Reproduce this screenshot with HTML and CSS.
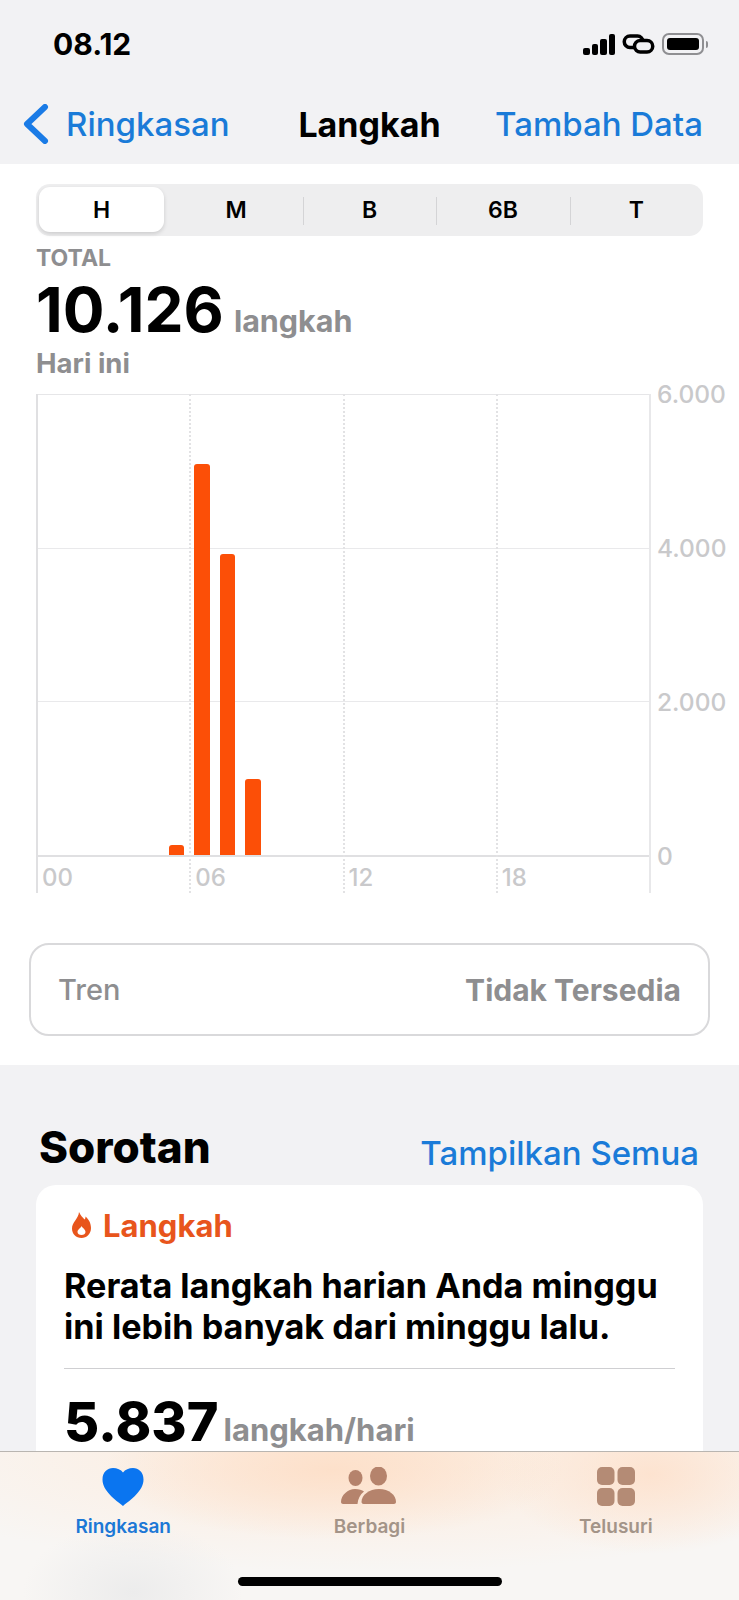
FILE: index.html
```html
<!DOCTYPE html>
<html lang="id">
<head>
  <meta charset="UTF-8">
  <meta name="viewport" content="width=device-width, initial-scale=1.0">
  <title>Langkah</title>
  <link rel="stylesheet" href="styles.css">
</head>
<body>
  <div class="phone">
    <header class="top">
      <div class="status">
        <span class="time">08.12</span>
        <div class="status-icons">
          <div class="signal">
            <span class="sig1"></span><span class="sig2"></span><span class="sig3"></span><span class="sig4"></span>
          </div>
          <svg class="link-icon" width="33" height="20" viewBox="0 0 33 20" fill="none" stroke="#000" stroke-width="3.500">
            <path d="M13 13.500H8A5.700 5.700 0 0 1 8 2h7.500A5.700 5.700 0 0 1 21 7.500"/>
            <path d="M12.500 12.500A5.700 5.700 0 0 1 18 6.500h7A5.700 5.700 0 0 1 25 18h-6.500A5.700 5.700 0 0 1 12.500 12.500Z"/>
          </svg>
          <div class="battery"><div class="battery-fill"></div></div>
          <span class="battery-nub"></span>
        </div>
      </div>
      <nav class="navbar">
        <a class="back">
          <svg width="26" height="40" viewBox="0 0 26 40" fill="none" stroke="#1a7be6" stroke-width="6" stroke-linecap="round" stroke-linejoin="round">
            <path d="M22 3 L4 20 L22 37"/>
          </svg>
          Ringkasan
        </a>
        <h1>Langkah</h1>
        <a class="add">Tambah Data</a>
      </nav>
    </header>

    <main class="detail">
      <div class="segments">
        <div class="seg active">H</div>
        <div class="seg">M</div>
        <div class="seg">B</div>
        <div class="seg">6B</div>
        <div class="seg">T</div>
      </div>

      <div class="total-label">TOTAL</div>
      <div class="total-row"><span class="total-value">10.126</span> <span class="total-unit">langkah</span></div>
      <div class="total-date">Hari ini</div>

      <div class="chart">
        <div class="plot">
          <div class="hline hline-1"></div>
          <div class="hline hline-2"></div>
          <div class="bars">
            <div class="slot" style="grid-column: 6"><div class="bar" style="height: 2.2%"></div></div>
            <div class="slot" style="grid-column: 7"><div class="bar" style="height: 85%"></div></div>
            <div class="slot" style="grid-column: 8"><div class="bar" style="height: 65.4%"></div></div>
            <div class="slot" style="grid-column: 9"><div class="bar" style="height: 16.5%"></div></div>
          </div>
        </div>
        <div class="xcols">
          <div class="xcol"><span>00</span></div>
          <div class="xcol"><span>06</span></div>
          <div class="xcol"><span>12</span></div>
          <div class="xcol"><span>18</span></div>
        </div>
        <div class="yaxis">
          <span>6.000</span>
          <span>4.000</span>
          <span>2.000</span>
          <span>0</span>
        </div>
      </div>

      <div class="trend">
        <span>Tren</span>
        <strong>Tidak Tersedia</strong>
      </div>
    </main>

    <section class="highlights">
      <div class="section-head">
        <h2>Sorotan</h2>
        <a>Tampilkan Semua</a>
      </div>
      <article class="card">
        <div class="card-title">
          <svg width="21" height="26" viewBox="0 0 21 26">
            <path fill="#e8551c" fill-rule="evenodd" d="M8 0C9.500 3.500 11.500 5 13.500 7.500 14.500 6.500 14.500 5.500 14.500 4.500 17.500 7 20 11 20 16 20 22 15.500 26 10.500 26 5 26 1 22 1 16.500 1 10 7.500 7 8 0ZM10.500 14C10 16 6.500 17.500 6.500 20 6.500 22 8.300 23 10.500 23S14.500 22 14.500 20C14.500 17.500 11.500 16 10.500 14Z"/>
          </svg>
          Langkah
        </div>
        <p class="card-text">Rerata langkah harian Anda minggu ini lebih banyak dari minggu lalu.</p>
        <div class="card-stat"><span class="stat-value">5.837</span> <span class="stat-unit">langkah/hari</span></div>
      </article>
    </section>

    <footer class="tabbar">
      <div class="tab current">
        <svg width="44" height="40" viewBox="0 0 43 40">
          <path fill="#0a75f0" d="M21.500 39C14 33 1 24 1 12.500 1 5 6 1 11.500 1 15.500 1 19.500 2.500 21.500 5.500 23.500 2.500 27.500 1 31.500 1 37 1 42 5 42 12.500 42 24 29 33 21.500 39Z"/>
        </svg>
        <span>Ringkasan</span>
      </div>
      <div class="tab">
        <svg width="56" height="40" viewBox="0 0 56 40" fill="#b5836c">
          <ellipse cx="14.500" cy="11" rx="7" ry="8"/>
          <ellipse cx="37.500" cy="9" rx="8.500" ry="9.500"/>
          <path d="M0 35C0 28 7 22 14 22 18 22 21 23 23 24.500 19 27.500 17 32 16.500 37H2C1 37 0 36 0 35Z"/>
          <path d="M20.500 35C20.500 28 28 22 38 22S55 28 55 35C55 36 54 37 53 37H22.500C21.500 37 20.500 36 20.500 35Z"/>
        </svg>
        <span>Berbagi</span>
      </div>
      <div class="tab">
        <svg width="40" height="40" viewBox="0 0 40 40" fill="#b48b75">
          <rect x="1" y="0" width="17.500" height="18" rx="5"/>
          <rect x="21.500" y="0" width="17.500" height="18" rx="5"/>
          <rect x="1" y="21" width="17.500" height="18" rx="5"/>
          <rect x="21.500" y="21" width="17.500" height="18" rx="5"/>
        </svg>
        <span>Telusuri</span>
      </div>
      <div class="home-bar"></div>
    </footer>
  </div>
</body>
</html>
```

FILE: styles.css
```css
html, body {
  margin: 0;
  padding: 0;
}

body {
  font-family: Inter, "Liberation Sans", sans-serif;
  background-color: #f2f2f4;
}

.phone {
  position: relative;
  width: 739px;
  height: 1600px;
  overflow: hidden;
  background-color: #f2f2f4;
  color: #000;
}

/* Status bar and navigation */
.status {
  height: 88px;
  display: flex;
  align-items: center;
  justify-content: space-between;
  padding: 0 31px 0 53px;
}

.time {
  font-size: 30px;
  font-weight: 700;
}

.status-icons {
  display: flex;
  align-items: center;
}

.signal {
  display: flex;
  align-items: flex-end;
  gap: 2px;
  height: 21px;
  margin-right: 7px;
}

.signal span {
  width: 6.5px;
  background-color: #000;
  border-radius: 2px;
}

.sig1 { height: 7px; }
.sig2 { height: 11px; }
.sig3 { height: 16px; }
.sig4 { height: 21px; }

.link-icon {
  margin-right: 7px;
}

.battery {
  box-sizing: border-box;
  width: 42px;
  height: 22px;
  padding: 3px;
  border: 2px solid #8f8f92;
  border-radius: 7px;
}

.battery-fill {
  height: 100%;
  background-color: #000;
  border-radius: 3px;
}

.battery-nub {
  width: 2px;
  height: 7px;
  margin-left: 2px;
  background-color: #8f8f92;
  border-radius: 0 2px 2px 0;
}

.navbar {
  height: 76px;
  box-sizing: border-box;
  padding: 0 36px 4px;
  display: grid;
  grid-template-columns: 1fr auto 1fr;
  align-items: center;
  font-size: 33px;
  color: #1a7bd8;
}

.navbar a {
  display: flex;
  align-items: center;
  gap: 17px;
  font-weight: 500;
}

.navbar .back {
  margin-left: -13px;
}

.navbar .add {
  justify-self: end;
}

.navbar h1 {
  margin: 0;
  font-size: 34px;
  font-weight: 700;
  color: #000;
}

/* White detail block with the chart */
.detail {
  background-color: #fff;
  padding: 20px 36px 29px;
}

.segments {
  display: grid;
  grid-template-columns: repeat(5, 1fr);
  height: 52px;
  background-color: #eeeeef;
  border-radius: 14px;
}

.seg {
  position: relative;
  display: flex;
  align-items: center;
  justify-content: center;
  font-size: 23px;
  font-weight: 600;
}

.seg + .seg + .seg::before {
  content: "";
  position: absolute;
  left: 0;
  top: 13px;
  bottom: 11px;
  width: 1px;
  background-color: #d4d4d6;
}

.seg.active {
  margin: 3px 5px 4px 3px;
  background-color: #fff;
  border-radius: 11px;
  box-shadow: 0 2px 4px rgba(0, 0, 0, 0.14);
}

.total-label {
  margin-top: 12px;
  line-height: 20px;
  font-size: 23px;
  font-weight: 700;
  color: #8e8e90;
}

.total-row {
  display: flex;
  align-items: baseline;
  gap: 10px;
  height: 60px;
  line-height: 60px;
  margin-top: 12px;
}

.total-value {
  font-size: 62px;
  font-weight: 700;
}

.total-unit {
  font-size: 30.500px;
  font-weight: 700;
  color: #8e8e90;
}

.total-date {
  margin-top: 8px;
  line-height: 30px;
  font-size: 27.500px;
  font-weight: 700;
  color: #8e8e90;
}

.chart {
  position: relative;
  height: 499px;
  margin-top: 16px;
}

.plot {
  position: relative;
  box-sizing: border-box;
  width: 613px;
  height: 463px;
  border-top: 1px solid #e6e6e8;
  border-bottom: 2px solid #e0e0e2;
}

.hline {
  position: absolute;
  left: 0;
  right: 0;
  height: 1px;
  background-color: #e9e9eb;
}

.hline-1 { top: 33.2%; }
.hline-2 { top: 66.5%; }

.bars {
  position: relative;
  z-index: 1;
  display: grid;
  grid-template-columns: repeat(24, 1fr);
  height: 100%;
}

.slot {
  display: flex;
  align-items: flex-end;
  justify-content: center;
}

.bar {
  width: 15.500px;
  background-color: #fc4f07;
  border-radius: 3px 3px 0 0;
}

.xcols {
  position: absolute;
  top: 0;
  bottom: 0;
  left: 0;
  width: 613px;
  display: grid;
  grid-template-columns: repeat(4, 1fr);
  border-right: 2px solid #e8e8ea;
}

.xcol {
  display: flex;
  align-items: flex-end;
  padding-left: 4px;
  border-left: 2px dotted #e2e2e4;
  font-size: 24px;
  font-weight: 500;
  line-height: 30px;
  color: #c9c9cb;
}

.xcol:first-child {
  border-left: 2px solid #e0e0e2;
}

.yaxis {
  position: absolute;
  top: -14px;
  left: 621px;
  height: 490px;
  display: flex;
  flex-direction: column;
  justify-content: space-between;
  font-size: 24.500px;
  font-weight: 500;
  line-height: 28px;
  color: #c9c9cb;
}

.trend {
  display: flex;
  align-items: center;
  justify-content: space-between;
  height: 93px;
  box-sizing: border-box;
  margin: 50px -7px 0;
  padding: 0 27px;
  border: 2px solid #d9d9db;
  border-radius: 20px;
  font-size: 29px;
  font-weight: 500;
  color: #8e8e90;
}

.trend strong {
  font-size: 30px;
  font-weight: 700;
}

/* Sorotan */
.highlights {
  padding: 60px 36px 0;
}

.section-head {
  display: flex;
  align-items: center;
  justify-content: space-between;
  height: 48px;
  margin-bottom: 12px;
  padding: 0 4px 0 3px;
}

.section-head h2 {
  margin: 0;
  padding-bottom: 4px;
  font-size: 44px;
  font-weight: 800;
}

.section-head a {
  padding-top: 8px;
  font-size: 33px;
  font-weight: 500;
  color: #1a7bd8;
}

.card {
  padding: 23px 28px 120px;
  background-color: #fff;
  border-radius: 20px;
}

.card-title {
  display: flex;
  align-items: center;
  gap: 11px;
  height: 34px;
  padding-left: 7px;
  font-size: 31px;
  font-weight: 700;
  color: #e8551c;
}

.card-text {
  margin: 23px 0 0;
  padding-bottom: 21px;
  border-bottom: 1px solid #cfcfd2;
  font-size: 34.200px;
  font-weight: 700;
  line-height: 41px;
}

.card-stat {
  display: flex;
  align-items: baseline;
  gap: 5px;
  height: 60px;
  line-height: 60px;
  margin-top: 23px;
}

.stat-value {
  font-size: 54px;
  font-weight: 800;
}

.stat-unit {
  font-size: 31px;
  font-weight: 700;
  color: #8e8e90;
}

/* Tab bar sits over the scrolled content */
.tabbar {
  position: absolute;
  left: 0;
  right: 0;
  bottom: 0;
  height: 149px;
  box-sizing: border-box;
  padding-top: 15px;
  display: grid;
  grid-template-columns: repeat(3, 1fr);
  align-items: start;
  border-top: 1px solid #b9b5b1;
  background-color: #f8f6f4;
  background-image:
    radial-gradient(ellipse 230px 70px at 45% 12%, #fde0ca, rgba(253, 224, 202, 0)),
    radial-gradient(ellipse 150px 80px at 88% 15%, #fde3d0, rgba(253, 227, 208, 0)),
    radial-gradient(ellipse 110px 70px at 18% 95%, #ececec, rgba(236, 236, 236, 0)),
    radial-gradient(ellipse 520px 120px at 50% 0, #fdebdc, rgba(253, 235, 220, 0));
}

.tab {
  display: flex;
  flex-direction: column;
  align-items: center;
  font-size: 19px;
  font-weight: 600;
  color: #a39488;
}

.tab span {
  margin-top: 8px;
  line-height: 24px;
}

.tab.current {
  color: #1c78d6;
}

.home-bar {
  position: absolute;
  left: 238px;
  bottom: 14px;
  width: 264px;
  height: 9px;
  background-color: #000;
  border-radius: 5px;
}
```
